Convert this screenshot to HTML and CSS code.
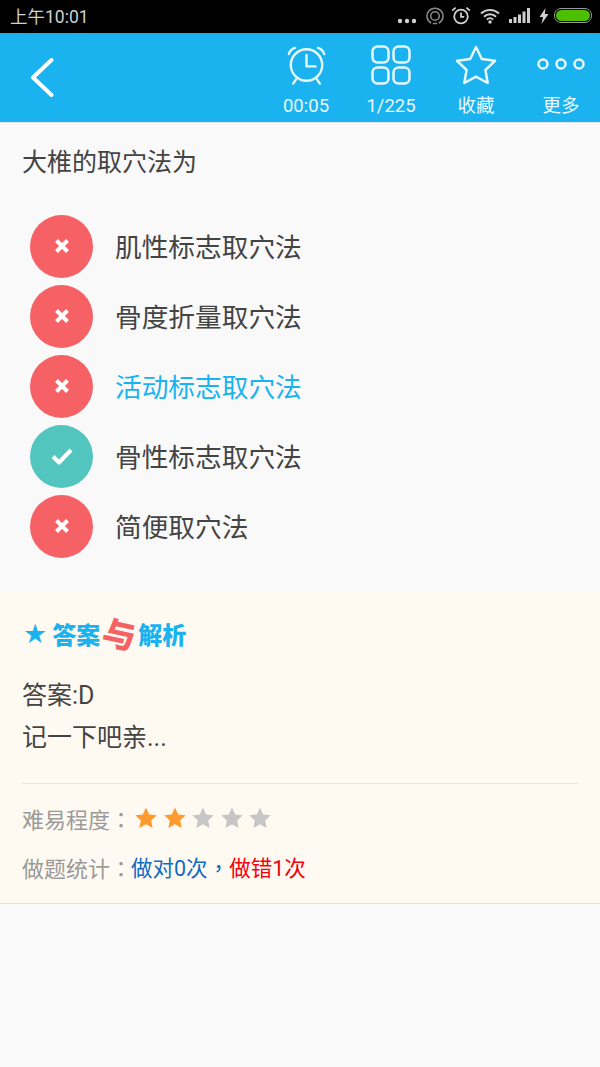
FILE: index.html
```html
<!DOCTYPE html>
<html lang="zh-CN">
  <head>
    <meta charset="UTF-8" />
    <meta name="viewport" content="width=device-width, initial-scale=1.0" />
    <title>答案与解析</title>
    <link rel="stylesheet" href="styles.css">
  </head>
  <body>
    <svg class="defs" width="0" height="0">
      <defs>
        <path id="star" d="M12 1.5l3.2 6.9 7.5.9-5.5 5.2 1.4 7.5L12 18.3l-6.6 3.7 1.4-7.5-5.5-5.2 7.5-.9z" />
        <g id="cross">
          <path d="M-5.5-5.5L5.5 5.5M5.5-5.5L-5.5 5.5" />
        </g>
      </defs>
    </svg>

    <div id="statusbar">
      <span class="clock">上午10:01</span>
      <div class="status-icons">
        <svg class="ic-dots" width="20" height="6" viewBox="0 0 20 6"><circle cx="3" cy="3" r="2.2" /><circle cx="10" cy="3" r="2.2" /><circle cx="17" cy="3" r="2.2" /></svg>
        <svg class="ic-sync" width="18" height="18" viewBox="0 0 18 18"><path d="M5.2 16.2A8 8 0 1 1 12.8 16.2" /><circle cx="9" cy="9" r="4.3" /><path d="M6.8 16.5h4.4" /></svg>
        <svg class="ic-alarm" width="20" height="19" viewBox="0 0 20 19"><circle cx="10" cy="10.5" r="6.8" /><path d="M10 6.5v4.3h3.2M1.2 4.6L4.6 1.6M18.8 4.6L15.4 1.6" /></svg>
        <svg width="20" height="16" viewBox="0 0 20 16"><path class="wifi" d="M1 5.5a13 13 0 0 1 18 0M4 8.8a8.6 8.6 0 0 1 12 0M6.9 11.6a4.4 4.4 0 0 1 6.2 0" /><circle cx="10" cy="14" r="1.7" /></svg>
        <svg width="21" height="15" viewBox="0 0 21 15"><rect x="0" y="11" width="3" height="4" /><rect x="4.5" y="9" width="3" height="6" /><rect x="9" y="6.5" width="3" height="8.5" /><rect x="13.500" y="3.500" width="3" height="11.500" /><rect x="18" y="0" width="3" height="15" /></svg>
        <svg width="10" height="16" viewBox="0 0 10 16"><path d="M6.500 0L0.500 9h3.500L2.500 16 9.500 6H5.800z" /></svg>
        <div class="battery"><div class="battery-fill"></div></div>
      </div>
    </div>

    <div id="header">
      <svg class="back" width="26" height="40" viewBox="0 0 26 40"><path d="M22.500 3L4 20.500 22.500 38" /></svg>
      <div class="actions">
        <div class="action">
          <svg width="39" height="40" viewBox="0 0 40 42"><circle cx="20" cy="21" r="16.500" /><path d="M20 10.500v12h9.500M1.500 9.500c1-3.500 3-5.500 6.500-6.500M38.500 9.500c-1-3.500-3-5.500-6.500-6.500M9 36l-3 4.500M31 36l3 4.500" /></svg>
          <span>00:05</span>
        </div>
        <div class="action">
          <svg width="40" height="40" viewBox="0 0 40 40"><rect x="1.500" y="1.500" width="16" height="16" rx="5" /><rect x="22.500" y="1.500" width="16" height="16" rx="5" /><rect x="1.500" y="22.500" width="16" height="16" rx="5" /><rect x="22.500" y="22.500" width="16" height="16" rx="5" /></svg>
          <span>1/225</span>
        </div>
        <div class="action">
          <svg width="42" height="40" viewBox="0 0 42 40"><path d="M21 2l5.800 12 13.200 1.800-9.600 9.200 2.300 13-11.700-6.300L9.300 38l2.300-13L2 15.800 15.200 14z" /></svg>
          <span>收藏</span>
        </div>
        <div class="action">
          <svg width="48" height="14" viewBox="0 0 48 14"><circle cx="6" cy="7" r="4.500" /><circle cx="24" cy="7" r="4.500" /><circle cx="42" cy="7" r="4.500" /></svg>
          <span>更多</span>
        </div>
      </div>
    </div>

    <div id="question">
      <p class="stem">大椎的取穴法为</p>
      <div class="option">
        <div class="mark wrong"><svg width="20" height="20" viewBox="-10 -10 20 20"><use href="#cross" /></svg></div>
        <span>肌性标志取穴法</span>
      </div>
      <div class="option">
        <div class="mark wrong"><svg width="20" height="20" viewBox="-10 -10 20 20"><use href="#cross" /></svg></div>
        <span>骨度折量取穴法</span>
      </div>
      <div class="option picked">
        <div class="mark wrong"><svg width="20" height="20" viewBox="-10 -10 20 20"><use href="#cross" /></svg></div>
        <span>活动标志取穴法</span>
      </div>
      <div class="option">
        <div class="mark right"><svg width="24" height="20" viewBox="0 0 24 20"><path d="M3 10.500l6 6L21 4" /></svg></div>
        <span>骨性标志取穴法</span>
      </div>
      <div class="option">
        <div class="mark wrong"><svg width="20" height="20" viewBox="-10 -10 20 20"><use href="#cross" /></svg></div>
        <span>简便取穴法</span>
      </div>
    </div>

    <div id="analysis">
      <div class="logo">
        <span class="logo-star">★</span>
        <span>答案</span>
        <span class="logo-with">与</span>
        <span>解析</span>
      </div>
      <p class="answer">答案:D<br />记一下吧亲...</p>
      <div class="meta">
        <div class="meta-row">
          <span class="meta-label">难易程度<span class="punct" lang="zh-TW">：</span></span>
          <div class="stars">
            <svg class="on" width="24" height="24" viewBox="0 0 24 24"><use href="#star" /></svg>
            <svg class="on" width="24" height="24" viewBox="0 0 24 24"><use href="#star" /></svg>
            <svg width="24" height="24" viewBox="0 0 24 24"><use href="#star" /></svg>
            <svg width="24" height="24" viewBox="0 0 24 24"><use href="#star" /></svg>
            <svg width="24" height="24" viewBox="0 0 24 24"><use href="#star" /></svg>
          </div>
        </div>
        <div class="meta-row">
          <span class="meta-label">做题统计<span class="punct" lang="zh-TW">：</span></span>
          <span class="stat-ok">做对0次<span class="punct" lang="zh-TW">，</span></span><span class="stat-bad">做错1次</span>
        </div>
      </div>
    </div>
  </body>
</html>
```

FILE: styles.css
```css
html,
body {
  margin: 0;
  height: 100%;
  background-color: #f9f9f9;
  font-family: "Roboto", "Noto Sans CJK SC", sans-serif;
  color: #444;
}
.defs {
  display: block;
  height: 0;
}
#statusbar {
  height: 33px;
  background-color: #000;
  color: #d0d0d0;
  display: flex;
  align-items: center;
  justify-content: space-between;
  padding: 0 8px 2px 10px;
  box-sizing: border-box;
  font-size: 17.500px;
}
.status-icons {
  display: flex;
  align-items: center;
  gap: 9px;
}
.status-icons svg {
  fill: #d0d0d0;
}
.ic-dots {
  margin-top: 10px;
}
.ic-sync,
.ic-alarm,
.wifi {
  fill: none;
  stroke: #d0d0d0;
}
.status-icons .ic-sync {
  fill: none;
  stroke: #8a8a8a;
  stroke-width: 1.500;
  margin-right: -2px;
}
.status-icons .ic-alarm {
  fill: none;
  stroke-width: 1.800;
}
.status-icons .wifi {
  fill: none;
  stroke-width: 2;
}
.battery {
  width: 38px;
  height: 15px;
  margin-left: -4px;
  border: 1px solid #9a9a9a;
  border-radius: 7px;
  padding: 1px;
  box-sizing: border-box;
}
.battery-fill {
  height: 100%;
  background-color: #4cc000;
  border-radius: 6px;
}
#header {
  height: 89px;
  background-color: #1ab3ef;
  border-bottom: 1px solid #e6e6e6;
  display: flex;
  align-items: center;
  justify-content: space-between;
  padding-left: 29px;
  overflow: hidden;
}
.back {
  margin-top: -1px;
}
.back path,
.action svg * {
  fill: none;
  stroke-linecap: round;
  stroke-linejoin: round;
}
.back path {
  stroke: #fff;
  stroke-width: 4;
}
.action svg * {
  stroke-width: 2.500;
  stroke: #e6f7fe;
}
.actions {
  display: flex;
  height: 100%;
  margin-right: -3.500px;
}
.action {
  width: 85px;
  display: flex;
  flex-direction: column;
  align-items: center;
  justify-content: flex-end;
  color: #e8f8fe;
  font-size: 18.500px;
  line-height: 24px;
  padding-bottom: 4px;
  box-sizing: border-box;
}
.action svg {
  flex: none;
  margin-bottom: 9px;
}
.action:last-child svg {
  margin-bottom: 23px;
}
#question {
  padding: 24px 0 29px;
}
.stem {
  margin: 0 0 32px 22px;
  font-size: 25px;
  line-height: 32px;
}
.option {
  height: 70px;
  display: flex;
  align-items: center;
  padding-left: 30px;
  gap: 22px;
  font-size: 26.700px;
}
.option span {
  padding-bottom: 2px;
}
.option.picked {
  color: #1ab3ef;
}
.mark {
  width: 63px;
  height: 63px;
  border-radius: 50%;
  display: flex;
  align-items: center;
  justify-content: center;
}
.mark.wrong {
  background-color: #f56165;
}
.mark.right {
  background-color: #53c5bf;
}
.mark svg {
  fill: none;
  stroke: #fff;
  stroke-width: 4;
  stroke-linejoin: round;
}
#analysis {
  background-color: #fffaf1;
  border-bottom: 1px solid #e2e0da;
  margin-top: 1px;
  padding: 20px 22px 12px;
}
.logo {
  display: flex;
  align-items: center;
  height: 44px;
  color: #1ab3ef;
  font-size: 24px;
  font-weight: 900;
}
.logo-star {
  margin: 0 5px 0 1px;
  font-size: 27px;
  font-family: "DejaVu Sans", sans-serif;
}
.logo-with {
  color: #f66165;
  font-size: 33px;
  margin: 0 2px 0 3px;
  transform: rotate(12deg);
}
.answer {
  margin: 20px 0 24px;
  font-size: 25px;
  line-height: 42px;
}
.meta {
  border-top: 1px solid #e8e6df;
  padding-top: 9px;
}
.meta-row {
  display: flex;
  align-items: center;
  height: 49px;
  font-size: 22px;
}
.meta-label {
  color: #9a9a9a;
}
.punct {
  font-family: "Noto Sans CJK TC", sans-serif;
}
.stars {
  display: flex;
  gap: 4.500px;
  margin-left: 2px;
}
.stars svg {
  fill: #c6c6c6;
}
.stars svg.on {
  fill: #ff9a2e;
}
.stat-ok {
  color: #0f6cc4;
  font-size: 21.500px;
  margin-left: -1px;
}
.stat-bad {
  color: #f5000c;
  font-size: 21.500px;
}
```
